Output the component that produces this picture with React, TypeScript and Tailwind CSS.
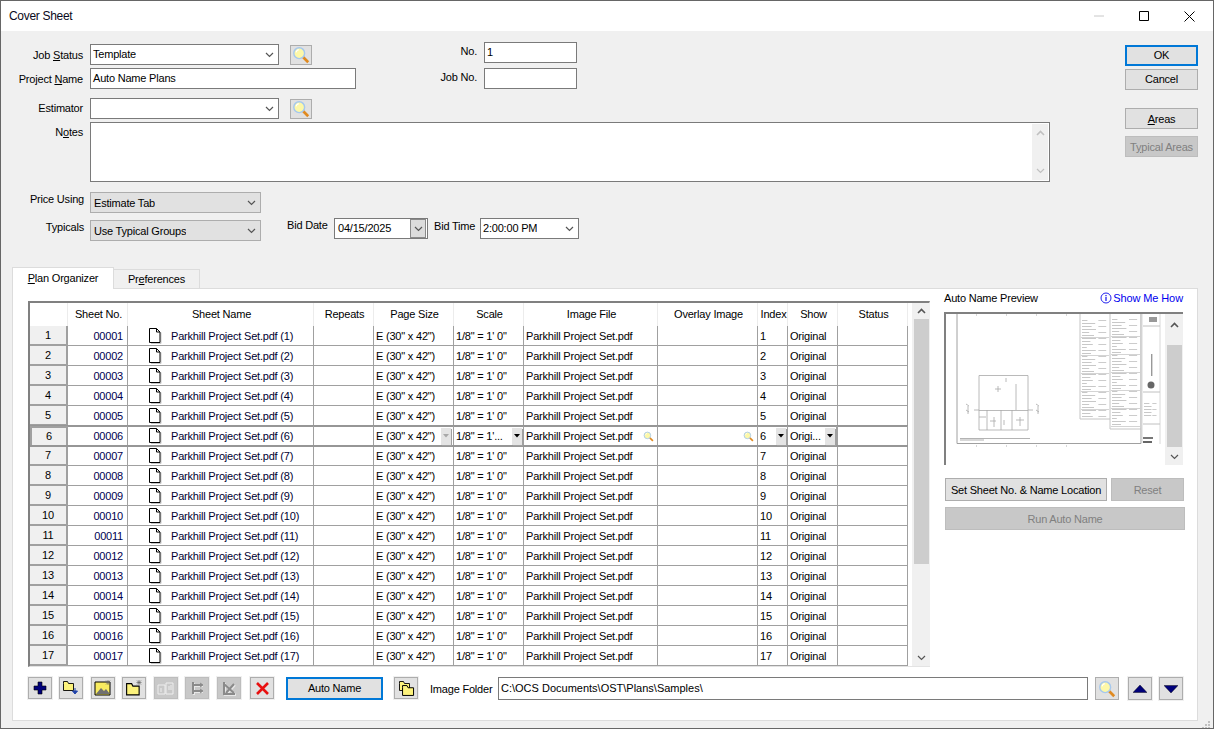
import React from "react";

const Chev = ({ c = "#555" }: { c?: string }) => (
  <svg width="9" height="6" viewBox="0 0 9 6" className="shrink-0"><path d="M1 1l3.5 3.5L8 1" fill="none" stroke={c} strokeWidth="1.2" /></svg>
);
const ChevUp = ({ c = "#555" }: { c?: string }) => (
  <svg width="9" height="6" viewBox="0 0 9 6"><path d="M1 5l3.5-3.5L8 5" fill="none" stroke={c} strokeWidth="1.6" /></svg>
);
const Mag = ({ s = 20 }: { s?: number }) => (
  <svg width={s} height={s} viewBox="0 0 20 20" className="shrink-0">
    <path d="M12 12l6 6" stroke="#e08a20" strokeWidth="3" />
    <circle cx="8" cy="8" r="6" fill="#fdf8a8" stroke="#a5c8ee" strokeWidth="1.6" />
    <path d="M4.5 7a4 4 0 0 1 3-3" stroke="#fff" strokeWidth="1.2" fill="none" />
  </svg>
);
const SearchBtn = ({ wide }: { wide?: boolean }) => (
  <div className={wide ? "flex h-[23px] w-[24px] items-center justify-center border border-[#adadad] bg-[#e1e1e1]" : "flex h-[20px] w-[22px] items-center justify-center border border-[#adadad] bg-[#e1e1e1]"}>
    <Mag s={18} />
  </div>
);
const Label = ({ children, cls }: { children: React.ReactNode; cls: string }) => (
  <div className={"text-right leading-[14px] " + cls}>{children}</div>
);
const Combo = ({ text, cls, gray }: { text: string; cls: string; gray?: boolean }) => (
  <div className={(gray ? "border-[#adadad] bg-[#e1e1e1] pl-[3px] " : "border-[#7a7a7a] bg-white pl-[2px] ") + "flex h-[21px] items-center justify-between border pr-[4px] " + cls}>
    <span className={gray ? "truncate pt-[2px]" : "truncate"}>{text}</span>
    <Chev />
  </div>
);
const Input = ({ text, cls }: { text?: string; cls: string }) => (
  <div className={"flex h-[21px] items-center border border-[#7a7a7a] bg-white pl-[2px] " + cls}>{text}</div>
);
const Btn = ({ children, cls }: { children: React.ReactNode; cls: string }) => (
  <div className={"flex items-center justify-center border " + cls}>{children}</div>
);

const colW = ["w-[38px]", "w-[60px]", "w-[186px]", "w-[60px]", "w-[80px]", "w-[70px]", "w-[134px]", "w-[100px]", "w-[30px]", "w-[50px]", "w-[70px]"];
const heads = ["", "Sheet No.", "Sheet Name", "Repeats", "Page Size", "Scale", "Image File", "Overlay Image", "Index", "Show", "Status"];

const Doc = () => (
  <svg width="13" height="16" viewBox="0 0 13 16" className="shrink-0">
    <path d="M2 15.5h10V4.5" stroke="#c8c8c8" fill="none" />
    <path d="M.5.5h7l3.5 3.5v10.5H.5z" fill="#fff" stroke="#000" />
    <path d="M7.5.5V4H11" fill="none" stroke="#000" />
  </svg>
);
const MiniDrop = ({ off }: { off?: boolean }) => (
  <div className="flex h-[17px] w-[10px] shrink-0 items-center justify-center bg-[#e4e4e4] shadow-[1px_1px_0_#a0a0a0]">
    <svg width="6" height="4" viewBox="0 0 6 4"><path d="M0 0h6L3 3.5z" fill={off ? "#a8a8a8" : "#000"} /></svg>
  </div>
);

const Row = ({ n }: { n: number }) => {
  const sel = n === 6;
  const prev = n === 5;
  const b = sel || prev ? "relative z-10 border-b border-[#969696] shadow-[0_1px_0_#969696]" : "border-b border-[#a0a0a0]";
  const cell = "flex h-full shrink-0 items-center border-r border-[#a0a0a0] pt-px ";
  return (
    <div className={"flex h-[20px] w-[878px] shrink-0 " + b}>
      <div className={sel ? "flex h-full w-[38px] shrink-0 items-center justify-center border-2 border-b-0 border-[#a0a0a0] bg-[#f0f0f0]" : "flex h-full w-[38px] shrink-0 items-center justify-center border-b border-r-2 border-[#a0a0a0] bg-[#f0f0f0]"}>{n}</div>
      <div className={cell + "w-[60px] justify-end pr-[4px] text-[#000050]"}>{String(n).padStart(5, "0")}</div>
      <div className={cell + "w-[186px] pl-[21px] text-[#000030]"}>
        <Doc />
        <span className="ml-[9px]">Parkhill Project Set.pdf ({n})</span>
      </div>
      <div className={cell + "w-[60px]"} />
      <div className={cell + "w-[80px] justify-between pl-[2px] pr-[2px]"}>
        <span>E (30" x 42")</span>
        {sel && <MiniDrop off />}
      </div>
      <div className={cell + "w-[70px] justify-between pl-[2px] pr-[1px]"}>
        <span>{sel ? "1/8\" = 1'..." : "1/8\" = 1' 0\""}</span>
        {sel && <MiniDrop />}
      </div>
      <div className={cell + "w-[134px] justify-between pl-[2px] pr-[3px]"}>
        <span>Parkhill Project Set.pdf</span>
        {sel && <Mag s={11} />}
      </div>
      <div className={cell + "w-[100px] justify-end pr-[3px]"}>{sel && <Mag s={11} />}</div>
      <div className={cell + "w-[30px] justify-between pl-[2px] pr-[1px]"}>
        <span>{n}</span>
        {sel && <MiniDrop />}
      </div>
      <div className={(sel ? "border-r-2 " : "") + cell + "w-[50px] justify-between pl-[2px] pr-[1px]"}>
        <span>{sel ? "Origi..." : "Original"}</span>
        {sel && <MiniDrop />}
      </div>
      <div className={cell + "w-[70px]"} />
    </div>
  );
};

const w = [9, 22, 16, 24, 12, 20, 26, 14, 18, 8, 23, 15];
const TextBlock = ({ x, y, width, h }: { x: number; y: number; width: number; h: number }) => {
  const items = [];
  for (let i = 0, yy = y + 1; yy < y + h - 1; yy += 3, i++) {
    items.push(<rect key={"a" + i} x={x + 1} y={yy} width={Math.min(w[i % 12] * 0.6, width * 0.5)} height={1} fill="#9a9a9a" opacity={0.55} />);
    if (i % 2 === 0) items.push(<rect key={"b" + i} x={x + width * 0.62} y={yy} width={width * 0.28} height={1} fill="#9a9a9a" opacity={0.5} />);
    if (i % 6 === 5) items.push(<rect key={"c" + i} x={x} y={yy + 2} width={width} height={0.6} fill="#888" opacity={0.6} />);
  }
  return <g>{items}</g>;
};
const Preview = () => (
  <svg width="219" height="149" viewBox="0 0 219 149" className="shrink-0">
    <path d="M0 0h219v149H0z" fill="#fff" />
    <path d="M11 0v129.500h184V0" fill="none" stroke="#a0a0a0" />
    <path d="M196 0v129M214 0v130" stroke="#d8d8d8" fill="none" />
    <path d="M164 0v115M134 0v105M134 105h30M164 115h31" stroke="#c4c4c4" fill="none" />
    <TextBlock x={135} y={5} width={28} h={100} />
    <TextBlock x={165} y={4} width={29} h={110} />
    <TextBlock x={197} y={88} width={15} h={16} />
    <path d="M197 12h17M197 78h17M197 110h17" stroke="#c0c0c0" />
    <rect x="205" y="40" width="1.4" height="22" fill="#999" />
    <circle cx="205" cy="71" r="3.500" fill="#666" />
    <rect x="203" y="3" width="8" height="5" fill="#999" />
    <rect x="197" y="123" width="10" height="2" fill="#777" />
    <rect x="197" y="127" width="9" height="2" fill="#666" />
    <g fill="none" stroke="#a8a8a8" strokeWidth="0.8">
      <path d="M33 61.500h49V116H33z" />
      <path d="M33 96.500h49M33 103h7M55 96v20M41 96v20M66 96v20M60 68v-4M70 70v26" />
      <path d="M20 90l3 2M20 96l3 2M90 90l3 2M90 96l3 2" />
      <path d="M22 92v8M92 92v8M28 96h5M82 96h5" />
      <path d="M44 107h6M48 103v10M58 106v5M70 106h8M74 103v9M49 75h6M52 72v6" />
    </g>
    <rect x="14" y="124" width="70" height="0.8" fill="#a0a0a0" />
    <rect x="14" y="125.5" width="24" height="1" fill="#b0b0b0" />
    <g fill="#d8d8d8">
      <rect x="30" y="0" width="1" height="2" /><rect x="60" y="0" width="1" height="2" /><rect x="90" y="0" width="1" height="2" /><rect x="120" y="0" width="1" height="2" />
      <rect x="30" y="131" width="1" height="2" /><rect x="60" y="131" width="1" height="2" /><rect x="90" y="131" width="1" height="2" /><rect x="120" y="131" width="1" height="2" />
    </g>
  </svg>
);

const TB = ({ children, off, cls }: { children: React.ReactNode; off?: boolean; cls: string }) => (
  <div className={(off ? "border-[#bdbdbd] bg-[#c8c8c8] " : "border-[#adadad] bg-[#e1e1e1] ") + "flex h-[22px] w-[24px] shrink-0 items-center justify-center border shadow-[0_0_0_1px_#f0f0f0] " + cls}>{children}</div>
);
const Folder = ({ x = 0, y = 0 }: { x?: number; y?: number }) => (
  <path transform={`translate(${x} ${y})`} d="M.5 2.500v-2h4l1 2h5v7H.5z" fill="#fcf27c" stroke="#000" strokeWidth="0.9" />
);

export default function App() {
  return (
    <div className="flex h-[729px] w-[1214px] flex-col overflow-hidden whitespace-nowrap border border-[#666] bg-[#f0f0f0] text-[11px] tracking-[-0.2px] text-black [font-family:'Liberation_Sans',Arial,sans-serif]">
      {/* Title bar */}
      <div className="flex h-[30px] shrink-0 items-center justify-between bg-white pl-[8px]">
        <span className="text-[12px] tracking-[-0.3px] text-[#0a0a20]">Cover Sheet</span>
        <div className="flex items-center">
          <svg width="10" height="2" viewBox="0 0 10 2"><path d="M0 1h10" stroke="#c8c8c8" /></svg>
          <svg width="10" height="10" viewBox="0 0 10 10" className="ml-[35px]"><path d="M.5.5h9v9h-9z" fill="none" stroke="#000" /></svg>
          <svg width="11" height="11" viewBox="0 0 11 11" className="ml-[35px] mr-[18px]"><path d="M.5.5l10 10M10.500.5l-10 10" stroke="#000" /></svg>
        </div>
      </div>

      {/* Form */}
      <div className="flex h-[236px] shrink-0">
        <div className="w-[1049px] shrink-0 pt-[11px]">
          <div className="flex">
            <div className="w-[355px] shrink-0 pt-[2px]">
              <div className="flex h-[21px] items-center">
                <Label cls="w-[82px]">Job <u>S</u>tatus</Label>
                <Combo text="Template" cls="ml-[7px] w-[189px]" />
                <div className="ml-[11px]"><SearchBtn /></div>
              </div>
              <div className="mt-[3px] flex h-[21px] items-center">
                <Label cls="w-[82px] pt-px">Project <u>N</u>ame</Label>
                <Input text="Auto Name Plans" cls="ml-[7px] w-[266px]" />
              </div>
            </div>
            <div className="ml-[60px]">
              <div className="flex h-[21px] items-center">
                <Label cls="w-[61px] pb-[3px]">No.</Label>
                <Input text="1" cls="ml-[7px] w-[93px]" />
              </div>
              <div className="mt-[5px] flex h-[21px] items-center">
                <Label cls="w-[61px] pb-[4px]">Job No.</Label>
                <Input cls="ml-[7px] w-[93px]" />
              </div>
            </div>
          </div>
          <div className="mt-[9px] flex h-[21px] items-center">
            <Label cls="w-[82px] pb-px">Estimator</Label>
            <Combo text="" cls="ml-[7px] w-[189px]" />
            <div className="ml-[11px]"><SearchBtn /></div>
          </div>
          <div className="mt-[3px] flex h-[60px]">
            <Label cls="w-[82px] pt-[3px]">N<u>o</u>tes</Label>
            <div className="ml-[7px] flex w-[960px] justify-end border border-[#7a7a7a] bg-white p-px">
              <div className="flex w-[16px] flex-col items-center justify-between bg-[#f0f0f0] py-[6px]">
                <ChevUp c="#c0c0c0" />
                <Chev c="#c0c0c0" />
              </div>
            </div>
          </div>
          <div className="mt-[10px] flex h-[21px] items-start">
            <Label cls="w-[83px]">Price Using</Label>
            <Combo gray text="Estimate Tab" cls="ml-[6px] w-[171px]" />
          </div>
          <div className="mt-[5px] flex items-start">
            <Label cls="mt-[2px] w-[83px]">Typicals</Label>
            <Combo gray text="Use Typical Groups" cls="ml-[6px] mt-[2px] w-[171px]" />
            <div className="ml-[26px] w-[42px] leading-[14px]">Bid Date</div>
            <div className="ml-[5px] flex h-[21px] w-[94px] items-center justify-between border border-[#7a7a7a] bg-white pl-[3px]">
              <span>04/15/2025</span>
              <div className="mr-px flex h-[19px] w-[16px] items-center justify-center border border-[#8a8a8a] bg-[#dcdcdc]"><Chev /></div>
            </div>
            <div className="ml-[6px] mt-[1px] w-[43px] leading-[14px]">Bid Time</div>
            <Combo text="2:00:00 PM" cls="ml-[3px] w-[99px]" />
          </div>
        </div>
        <div className="ml-[75px] w-[73px] shrink-0 pt-[14px]">
          <Btn cls="h-[21px] border-2 border-[#0078d7] bg-[#e1e1e1]">OK</Btn>
          <Btn cls="mt-[3px] h-[21px] border-[#adadad] bg-[#e1e1e1]">Cancel</Btn>
          <Btn cls="mt-[18px] h-[21px] border-[#adadad] bg-[#e1e1e1] pt-px"><span><u>A</u>reas</span></Btn>
          <Btn cls="mt-[7px] h-[21px] border-[#bdbdbd] bg-[#c8c8c8] pt-px text-[#808080]"><span>T<u>y</u>pical Areas</span></Btn>
        </div>
      </div>

      {/* Tabs */}
      <div className="relative z-20 flex h-[21px] shrink-0 items-end pl-[11px]">
        <div className="-mb-px flex h-[22px] w-[102px] items-center justify-center border border-b-0 border-[#dcdcdc] bg-white"><span><u>P</u>lan Organizer</span></div>
        <div className="flex h-[19px] w-[86px] items-center justify-center border border-l-0 border-b-0 border-[#dcdcdc]"><span>Pr<u>e</u>ferences</span></div>
      </div>

      {/* Panel */}
      <div className="ml-[11px] h-[433px] w-[1186px] shrink-0 border border-[#dcdcdc] bg-white pl-[15px] pt-[2px]">
        <div className="flex items-start">
          <div className="mt-[10px] flex h-[366px] w-[902px] shrink-0 border-b border-l-2 border-r border-t-2 border-[#e3e3e3] border-l-[#808080] border-t-[#808080]">
            <div className="w-[882px] shrink-0 overflow-hidden">
              <div className="flex h-[23px]">
                {heads.map((h, i) => (
                  <div key={i} className={"flex h-full shrink-0 items-center justify-center border-r border-[#ececec] pl-[2px] " + colW[i]}>{h}</div>
                ))}
              </div>
              {Array.from({ length: 17 }, (_, i) => <Row key={i} n={i + 1} />)}
            </div>
            <div className="flex w-[18px] shrink-0 flex-col items-center bg-[#f0f0f0] pt-[5px]">
              <ChevUp />
              <div className="mt-[5px] h-[245px] w-[15px] bg-[#cdcdcd]" />
              <div className="mt-[91px]"><Chev /></div>
            </div>
          </div>
          <div className="ml-[14px] w-[241px] shrink-0">
            <div className="flex h-[14px] items-center justify-between pr-[2px] leading-[14px]">
              <span>Auto Name Preview</span>
              <span className="flex items-center tracking-[-0.1px] text-[#0000ee]">
                <svg width="12" height="12" viewBox="0 0 12 12" className="mr-px"><circle cx="6" cy="6" r="5" fill="none" stroke="#2222ee" /><path d="M6 5v4M6 3v1.200" stroke="#2222ee" strokeWidth="1.3" /></svg>
                Show Me How
              </span>
            </div>
            <div className="mt-[7px] flex h-[153px] w-[239px] border-l-2 border-t-2 border-[#808080] bg-white">
              <Preview />
              <div className="flex w-[18px] shrink-0 flex-col items-center bg-[#f0f0f0] pt-[8px]">
                <ChevUp />
                <div className="mt-[17px] h-[102px] w-[15px] bg-[#cdcdcd]" />
                <div className="mt-[7px]"><Chev /></div>
              </div>
            </div>
            <div className="mt-[13px] flex pl-px">
              <Btn cls="h-[23px] w-[162px] border-[#adadad] bg-[#e1e1e1] pt-px">Set Sheet No. &amp; Name Location</Btn>
              <Btn cls="ml-[4px] h-[23px] w-[73px] border-[#bdbdbd] bg-[#c8c8c8] pt-px text-[#808080]">Reset</Btn>
            </div>
            <div className="mt-[6px] pl-px">
              <Btn cls="h-[23px] w-[240px] border-[#bdbdbd] bg-[#c8c8c8] pt-px text-[#808080]">Run Auto Name</Btn>
            </div>
          </div>
        </div>

        {/* Toolbar */}
        <div className="mt-[10px] flex h-[23px] items-start">
          <TB cls="">
            <svg width="14" height="14" viewBox="0 0 14 14"><path d="M5 1h4v4h4v4H9v4H5V9H1V5h4z" fill="#00007a" stroke="#000" strokeWidth="0.6" /></svg>
          </TB>
          <TB cls="ml-[7px]">
            <svg width="18" height="18" viewBox="0 0 18 18"><g transform="translate(1 2)"><Folder /></g><path d="M13 9v5M10.500 12l2.500 3 2.500-3z" stroke="#2244aa" fill="#2244aa" /></svg>
          </TB>
          <TB cls="ml-[8px]">
            <svg width="18" height="18" viewBox="0 0 18 18"><path d="M1 3h15v13H1z" fill="#f8ec60" stroke="#000" /><path d="M2 15l5-6 3 3 2-2 4 5z" fill="#707070" /><path d="M14 1v5M11.500 3.500h5M12 1.500l4 4M16 1.500l-4 4" stroke="#666" strokeWidth="0.7" /></svg>
          </TB>
          <TB cls="ml-[7px]">
            <svg width="18" height="18" viewBox="0 0 18 18"><g transform="translate(1 4) scale(1.25)"><Folder /></g><path d="M14 1v5M11.500 3.500h5M12 1.500l4 4M16 1.500l-4 4" stroke="#666" strokeWidth="0.7" /></svg>
          </TB>
          <TB off cls="ml-[8px]">
            <svg width="18" height="16" viewBox="0 0 18 16" fill="none" stroke="#eeeeee"><path d="M1 5h7v9H1zM9 3h7v11H9z" /><path d="M4 8v4M12 6v4M14 5v5" /></svg>
          </TB>
          <TB off cls="ml-[7px]">
            <svg width="16" height="16" viewBox="0 0 16 16" fill="none" strokeWidth="2">
              <g stroke="#e8e8e8" transform="translate(1 1)"><path d="M4 2v12M4 5h9M4 11h9" /></g>
              <g stroke="#8a8a8a"><path d="M4 2v12M4 5h9M4 11h9" /><path d="M11 3l3 2-3 2M11 9l3 2-3 2" strokeWidth="1" /></g>
            </svg>
          </TB>
          <TB off cls="ml-[8px]">
            <svg width="16" height="16" viewBox="0 0 16 16" fill="none" strokeWidth="2">
              <path transform="translate(1 1)" d="M3 2v12h11M3 4l10 9M13 4L5 13" stroke="#e8e8e8" />
              <path d="M3 2v12h11M3 4l10 9M13 4L5 13" stroke="#8a8a8a" />
            </svg>
          </TB>
          <TB cls="ml-[9px]">
            <svg width="13" height="13" viewBox="0 0 13 13"><path d="M1 1l11 11M12 1L1 12" stroke="#e81010" strokeWidth="2.600" /></svg>
          </TB>
          <Btn cls="ml-[12px] h-[23px] w-[97px] shrink-0 border-2 border-[#0078d7] bg-[#e1e1e1]">Auto Name</Btn>
          <TB cls="ml-[11px]">
            <svg width="17" height="17" viewBox="0 0 17 17"><g transform="translate(1 1)"><Folder /></g><g transform="translate(4 5) scale(1.1)"><Folder /></g></svg>
          </TB>
          <span className="ml-[12px] mt-[5px] w-[68px] shrink-0 leading-[14px]">Image Folder</span>
          <div className="flex h-[23px] w-[590px] shrink-0 items-center border border-[#7a7a7a] bg-white pl-[2px] tracking-normal">C:\OCS Documents\OST\Plans\Samples\</div>
          <div className="ml-[7px] shrink-0"><SearchBtn wide /></div>
          <TB cls="ml-[9px] h-[23px]">
            <svg width="14" height="8" viewBox="0 0 14 8"><path d="M7 0l7 7.500H0z" fill="#00007a" stroke="#000" strokeWidth="0.4" /></svg>
          </TB>
          <TB cls="ml-[7px] h-[23px]">
            <svg width="14" height="8" viewBox="0 0 14 8"><path d="M7 8L0 .5h14z" fill="#00007a" stroke="#000" strokeWidth="0.4" /></svg>
          </TB>
        </div>
      </div>

      {/* Resize grip */}
      <div className="flex flex-1 justify-end pr-[2px]">
        <svg width="10" height="8" viewBox="0 0 10 8" fill="#c0c0c0"><rect x="7" y="0" width="2" height="2" /><rect x="4" y="3" width="2" height="2" /><rect x="7" y="3" width="2" height="2" /><rect x="1" y="6" width="2" height="2" /><rect x="4" y="6" width="2" height="2" /><rect x="7" y="6" width="2" height="2" /></svg>
      </div>
    </div>
  );
}
